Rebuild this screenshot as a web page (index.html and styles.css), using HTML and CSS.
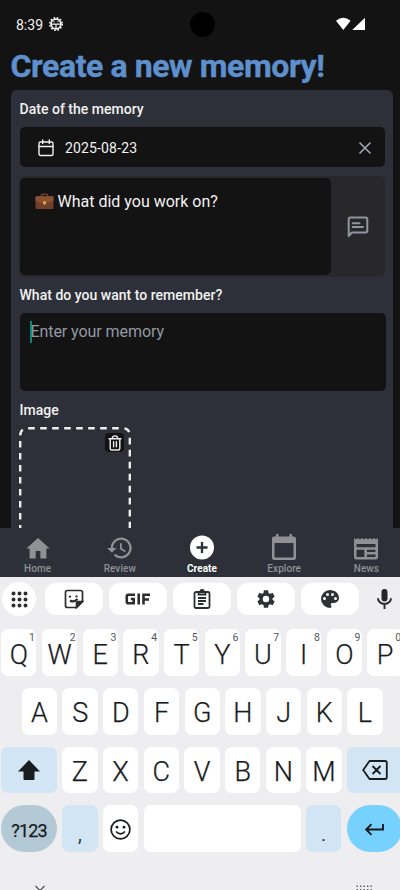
FILE: index.html
```html
<!DOCTYPE html>
<html lang="en">
<head>
<meta charset="utf-8">
<title>Create a new memory</title>
<link rel="stylesheet" href="styles.css">
</head>
<body>
<div class="phone">
  <header class="status">
    <span class="time">8:39</span>
    <svg class="gear" width="14" height="14" viewBox="0 0 14 14" fill="none" stroke="#f2f2f2"><circle cx="7" cy="7" r="6.200" stroke-width="1.600" stroke-dasharray="1.700 1.546"/><circle cx="7" cy="7" r="4.900" stroke-width="1.700"/><path d="M2.500 7.200h9M7 7v4.500M5 4.300v1M9 4.300v1" stroke-width="1.200"/></svg>
    <span class="camera"></span>
    <svg class="signal" width="30" height="14" viewBox="0 0 30 14" fill="#fff"><path d="M0 3.800Q7.200-2.400 14.600 3.800L7.300 13zM29 .8V13H16.200z"/></svg>
  </header>
  <h1>Create a new memory!</h1>
  <main class="card">
    <label class="label">Date of the memory</label>
    <div class="date">
      <svg width="16" height="18" viewBox="0 0 16 18" fill="none" stroke="#f0f0f0" stroke-width="1.400" stroke-linecap="round" stroke-linejoin="round"><rect x="1" y="3" width="14" height="13.500" rx="1.500"/><path d="M1 7.500h14M4.700 1v3.600M11.300 1v3.600"/></svg>
      <span>2025-08-23</span>
      <svg class="clear" width="12" height="12" viewBox="0 0 12 12" stroke="#9ea3b5" stroke-width="1.700" stroke-linecap="round"><path d="M1 1l10 10M11 1L1 11"/></svg>
    </div>
    <div class="prompt">
      <div class="question">
        <svg width="19" height="17" viewBox="0 0 19 17"><path d="M6.500 4V2.200q0-1 1-1h4q1 0 1 1V4" fill="none" stroke="#6d3f2d" stroke-width="1.500"/><rect x=".5" y="3.200" width="18" height="12.800" rx="1.300" fill="#70402b"/><path d="M.5 4.500q0-1.300 1.300-1.300h15.400q1.300 0 1.300 1.300v3.200q-4 2.300-9 2.300t-9-2.300z" fill="#8b5133"/><path d="M8 8.200h3v2.600L9.500 12 8 10.800z" fill="#e2a23b"/></svg>
        <span>What did you work on?</span>
      </div>
      <div class="chat">
        <svg width="22" height="22" viewBox="0 0 22 22" fill="none" stroke="#8f96a2" stroke-width="2" stroke-linecap="round" stroke-linejoin="round"><path d="M1.700 20V3.200q0-1.700 1.700-1.700h15.200q1.700 0 1.700 1.700v11.600q0 1.700-1.700 1.700H4.900zM5.800 7.200h6.700M5.800 11h10.200"/></svg>
      </div>
    </div>
    <label class="label second">What do you want to remember?</label>
    <div class="entry"><i class="caret"></i>Enter your memory</div>
    <label class="label third">Image</label>
    <div class="upload">
      <svg class="dash" width="112" height="112" viewBox="0 0 112 112" fill="none" stroke="#eee" stroke-width="2.400"><path d="M1.200 112V9q0-7.800 7.800-7.800h94q7.800 0 7.800 7.800v103" stroke-dasharray="6.600 5.400" stroke-dashoffset="4.500"/></svg>
      <span class="trash"><svg width="14" height="16" viewBox="0 0 14 16" fill="none" stroke="#eee" stroke-width="1.400" stroke-linecap="round" stroke-linejoin="round"><path d="M1 3.700h12M4.300 3.500q0-2.600 2.700-2.600t2.700 2.600M2.200 4v9.500q0 1.500 1.500 1.500h6.600q1.500 0 1.500-1.500V4M5.600 6.800v5M8.400 6.800v5"/></svg></span>
    </div>
  </main>
  <nav class="tabs">
    <div class="tab"><svg width="28" height="28" viewBox="0 0 24 24"><path d="M10 21v-6.500h4V21h5.200v-8.500h2.800L12 3.500 2 12.500h2.800V21z"/></svg>Home</div>
    <div class="tab"><svg width="28" height="28" viewBox="0 0 24 24"><path d="M13 3a9 9 0 0 0-9 9H1l3.900 3.900.1.100L9 12H6a7 7 0 1 1 2.060 4.940l-1.420 1.420A9 9 0 1 0 13 3zm-1 5v5l4.280 2.540.720-1.210-3.500-2.080V8z"/></svg>Review</div>
    <div class="tab on"><svg width="26" height="26" viewBox="0 0 26 26"><circle cx="13" cy="12.500" r="12"/><path d="M13 7v11M7.500 12.500h11" stroke="#2d3038" stroke-width="2.300"/></svg>Create</div>
    <div class="tab"><svg width="28" height="28" viewBox="0 0 28 28"><path d="M3.500 2.500H6V0h2.500v2.500h11V0H22v2.500h1.500Q26 2.500 26 5v18.500Q26 26 23.500 26h-19Q2 26 2 23.500V5q0-2.500 1.500-2.500zM4.500 9v14.500h19V9z" fill-rule="evenodd"/></svg>Explore</div>
    <div class="tab"><svg width="26" height="26" viewBox="0 0 26 26"><path d="M1 2l2 1.500L5 2l2 1.500L9 2l2 1.500L13 2l2 1.500L17 2l2 1.500L21 2l2 1.500L25 2v19q0 2.500-2.500 2.500h-19Q1 23.500 1 21zM3.500 8v3.200h19V8zM3.500 13.800V21h7.800v-7.200zM14 13.800v2.200h8.500v-2.200zM14 18.600V21h8.500v-2.400z" fill-rule="evenodd"/></svg>News</div>
  </nav>
  <section class="keyboard">
    <div class="tools">
      <span class="round"><svg width="17" height="17" viewBox="0 0 17 17" fill="none" stroke="#2c2d2f" stroke-width="4" stroke-linecap="round"><path d="M2.500 2.500h0M8.500 2.500h0M14.500 2.500h0M2.500 8.500h0M8.500 8.500h0M14.500 8.500h0M2.500 14.500h0M8.500 14.500h0M14.500 14.500h0"/></svg></span>
      <span class="chip"><svg width="20" height="20" viewBox="0 0 20 20" fill="none" stroke="#2c2d2f" stroke-width="1.700"><path d="M12.500 18.500H3.500q-2 0-2-2v-13q0-2 2-2h13q2 0 2 2v9z"/><path d="M12.500 18.500v-4q0-2 2-2h4z" fill="#2c2d2f"/><path d="M6 8.500V6.800M12.500 8.200V6.500M6 11.500q4 2.500 7.500-1.500" stroke-width="2.200"/></svg></span>
      <span class="chip"><svg width="26" height="12" viewBox="0 0 26 12" fill="none" stroke="#2c2d2f" stroke-width="2.600"><path d="M10 1.800H3.300q-1.500 0-1.500 1.500v5.400q0 1.500 1.500 1.500h5.400V6H5.800M13.700.5v11M18.500 11.500V1.800h6.500M18.500 6.500h5.500"/></svg></span>
      <span class="chip"><svg width="18" height="20" viewBox="0 0 18 20" fill="none" stroke="#2c2d2f" stroke-width="1.800"><rect x="1.500" y="3" width="15" height="16" rx="1.500"/><path d="M5.500 3v2.500h7V3M7.200 3q0-2 1.800-2t1.800 2M5 9h8M5 12h8M5 15h5.500"/></svg></span>
      <span class="chip"><svg width="22" height="22" viewBox="0 0 24 24" fill="#303133"><path d="M19.140 12.940a7 7 0 0 0 0-1.880l2.030-1.580a.5.5 0 0 0 .120-.610l-1.920-3.320a.5.5 0 0 0-.590-.220l-2.390.960a7 7 0 0 0-1.620-.940l-.360-2.540a.5.5 0 0 0-.480-.410h-3.840a.5.5 0 0 0-.470.410l-.360 2.540a7 7 0 0 0-1.620.940l-2.390-.960a.5.5 0 0 0-.590.220L2.740 8.870a.5.5 0 0 0 .120.610l2.030 1.580a7 7 0 0 0 0 1.880l-2.030 1.580a.5.5 0 0 0-.120.610l1.920 3.320a.5.5 0 0 0 .590.220l2.390-.960q.75.590 1.620.940l.360 2.540a.5.5 0 0 0 .480.410h3.840a.5.5 0 0 0 .470-.410l.360-2.540a7 7 0 0 0 1.620-.940l2.390.960a.5.5 0 0 0 .590-.220l1.920-3.320a.5.5 0 0 0-.120-.610zM12 15.500a3.500 3.500 0 1 1 0-7 3.500 3.500 0 0 1 0 7z"/></svg></span>
      <span class="chip"><svg width="24" height="24" viewBox="0 0 24 24" fill="#303133"><path d="M12 3a9 9 0 0 0 0 18 1.500 1.500 0 0 0 1.110-2.500 1.500 1.500 0 0 1 1.120-2.500H16a5 5 0 0 0 5-5c0-4.420-4.030-8-9-8z"/><g fill="#fff"><circle cx="6.500" cy="11.500" r="1.500"/><circle cx="9.500" cy="7.500" r="1.500"/><circle cx="14.500" cy="7.500" r="1.500"/><circle cx="17.500" cy="11.500" r="1.500"/></g></svg></span>
      <span class="mic"><svg width="15" height="20" viewBox="0 0 15 20"><rect x="4.500" y="0" width="6" height="12.500" rx="3" fill="#252628"/><path d="M1 9.200a6.500 5.800 0 0 0 13 0M7.500 15v5" fill="none" stroke="#252628" stroke-width="1.900"/></svg></span>
    </div>
    <div class="row"><b class="key">Q<sup>1</sup></b><b class="key">W<sup>2</sup></b><b class="key">E<sup>3</sup></b><b class="key">R<sup>4</sup></b><b class="key">T<sup>5</sup></b><b class="key">Y<sup>6</sup></b><b class="key">U<sup>7</sup></b><b class="key">I<sup>8</sup></b><b class="key">O<sup>9</sup></b><b class="key">P<sup>0</sup></b></div>
    <div class="row inset"><b class="key">A</b><b class="key">S</b><b class="key">D</b><b class="key">F</b><b class="key">G</b><b class="key">H</b><b class="key">J</b><b class="key">K</b><b class="key">L</b></div>
    <div class="row"><b class="key wide tint"><svg width="22" height="20" viewBox="0 0 22 20"><path d="M11 0l11 11.500h-5.500V19q0 1-1 1h-9q-1 0-1-1v-7.500H0z" fill="#191c1e"/></svg></b><b class="key">Z</b><b class="key">X</b><b class="key">C</b><b class="key">V</b><b class="key">B</b><b class="key">N</b><b class="key">M</b><b class="key wide tint"><svg width="26" height="20" viewBox="0 0 26 20" fill="none" stroke="#191c1e" stroke-width="1.800" stroke-linejoin="round"><path d="M7.500 1H23q1.800 0 1.800 1.800v14.400q0 1.800-1.800 1.800H7.500L1.200 10zM10.500 6l8 8M18.500 6l-8 8"/></svg></b></div>
    <div class="row"><b class="key wide sym">?123</b><b class="key tint low">,</b><b class="key face"><svg width="21" height="21" viewBox="0 0 21 21" fill="none" stroke="#191c1e" stroke-width="1.700"><circle cx="10.500" cy="10.500" r="9.400"/><path d="M6 12.500q4.500 4.600 9 0"/><g fill="#191c1e" stroke="none"><circle cx="7" cy="8.200" r="1.400"/><circle cx="14" cy="8.200" r="1.400"/></g></svg></b><b class="key space"></b><b class="key tint low">.</b><b class="key wide enter"><svg width="19" height="13" viewBox="0 0 19 13" fill="none" stroke="#191c1e" stroke-width="1.900"><path d="M18 1v5.500H1.500M6.500 1.200L1.200 6.500l5.300 5.300"/></svg></b></div>
    <div class="foot">
      <svg width="10" height="8" viewBox="0 0 10 8" fill="none" stroke="#55575a" stroke-width="1.300"><path d="M.5 1L5 5.500 9.500 1"/></svg>
      <svg width="17" height="8" viewBox="0 0 17 8" fill="none" stroke="#55575a" stroke-width="1.400" stroke-dasharray="1.400 2.100"><path d="M.5 1.200h16M.5 4.800h16"/></svg>
    </div>
  </section>
</div>
</body>
</html>
```
FILE: styles.css
```css
* { box-sizing: border-box; }
body { margin: 0; background: #131313; font-family: Roboto, "Liberation Sans", sans-serif; }
svg { display: block; flex: none; }
.phone { width: 400px; height: 890px; overflow: hidden; display: flex; flex-direction: column; background: #131313; }
.status { height: 48px; flex: none; display: flex; align-items: center; padding-left: 16px; color: #f2f2f2; }
.time { width: 33px; font-size: 14px; line-height: 20px; padding-top: 1px; }
.camera { width: 25px; height: 25px; border-radius: 50%; background: #000; margin-left: 127px; }
.signal { margin-left: 121px; }
h1 { margin: 0; height: 42px; flex: none; padding-left: 10.500px; font-size: 32px; line-height: 37px; font-weight: 700; letter-spacing: -.41px; -webkit-text-stroke: .4px #5d90cd; color: #5d90cd; white-space: nowrap; }
.card { flex: none; height: 438px; width: 382px; margin-left: 11px; padding: 10px 8px 0; border-radius: 6px 6px 0 0; background: #2d3038; overflow: hidden; color: #f2f2f2; }
.label { display: block; font-size: 14px; font-weight: 500; line-height: 18px; padding-left: .5px; letter-spacing: .02px; }
.date { margin: 9px 0 0 .5px; height: 40px; width: 365px; border-radius: 5px; background: #131313; display: flex; align-items: center; padding: 1px 14px 0 18.500px; font-size: 14px; letter-spacing: .15px; }
.date span { margin-left: 11px; flex: 1; padding-top: 1px; }
.prompt { margin-top: 9px; width: 366px; height: 101px; display: flex; border-radius: 6px; background: #28282a; }
.question { width: 311px; height: 97px; margin: 1.500px 0 0 1px; border-radius: 5px; background: #131313; display: flex; gap: 4px; padding: 14px 0 0 14.500px; font-size: 16px; line-height: 20px; }
.question svg { margin-top: 1px; }
.chat { flex: 1; display: flex; align-items: center; justify-content: center; }
.second { margin-top: 9px; }
.entry { margin: 8.500px 0 0 .5px; width: 366px; height: 78px; border-radius: 5px; background: #131313; display: flex; padding: 9.500px 0 0 10.500px; font-size: 16px; line-height: 20px; letter-spacing: -.07px; color: #9299a5; }
.caret { width: 2px; height: 22px; margin: -1.500px -1.500px 0 0; background: #078875; }
.third { margin-top: 10px; }
.upload { position: relative; width: 112px; margin: 8.500px 0 0 -.5px; }
.trash { position: absolute; right: 6.500px; top: 6px; width: 19px; height: 19px; border-radius: 4px; background: #131313; display: flex; align-items: center; justify-content: center; }
.tabs { flex: none; height: 49px; width: 411px; margin-left: -3.500px; display: grid; grid-template-columns: repeat(5, 1fr); background: #2d3038; }
.tab { display: flex; flex-direction: column; align-items: center; justify-content: flex-end; font-size: 10px; line-height: 12px; font-weight: 500; letter-spacing: .05px; color: #8f9195; fill: #8f9195; padding-bottom: 2px; }
.tab svg { margin-bottom: 1px; }
.on { color: #fff; fill: #fff; font-weight: 700; }
.tab.on svg { margin-bottom: 2px; }
.keyboard { flex: 1; background: #eeeef0; color: #191c1e; }
.tools { height: 52px; padding: 5px 0 0 2px; display: flex; align-items: flex-start; }
.round, .chip, .mic { display: flex; align-items: center; justify-content: center; flex: none; background: #fff; }
.round { width: 34px; height: 34px; border-radius: 50%; margin-right: 9px; }
.chip { width: 58px; height: 32px; border-radius: 11px; margin: 1px 6px 0 0; }
.mic { background: none; width: 39px; height: 32px; margin-top: 1px; }
.row { display: flex; gap: 5.400px; height: 46.800px; margin-bottom: 12px; padding-left: 1.200px; }
.inset { padding-left: 21.800px; }
.key { position: relative; flex: none; width: 35.300px; border-radius: 7px; background: #fff; display: flex; align-items: center; justify-content: center; font-size: 27px; line-height: 30px; font-weight: 350; -webkit-text-stroke: .25px #191c1e; padding-top: 4.500px; }
.key sup { position: absolute; top: 3px; right: 1.500px; font-size: 10.500px; line-height: 12px; font-weight: 400; -webkit-text-stroke: 0; color: #55575a; }
.wide { width: 55.700px; }
.tint { background: #d2e5f4; }
.wide.tint, .key.enter, .key.face { padding-top: 1px; }
.sym { border-radius: 24px; background: #b3c9d6; font-size: 18px; letter-spacing: -.8px; font-weight: 400; }
.low { padding-top: 11px; font-size: 22px; }
.space { width: 157px; }
.enter { border-radius: 24px; background: #77d1ff; }
.foot { display: flex; justify-content: space-between; padding: 21px 27px 0 35px; }
```
